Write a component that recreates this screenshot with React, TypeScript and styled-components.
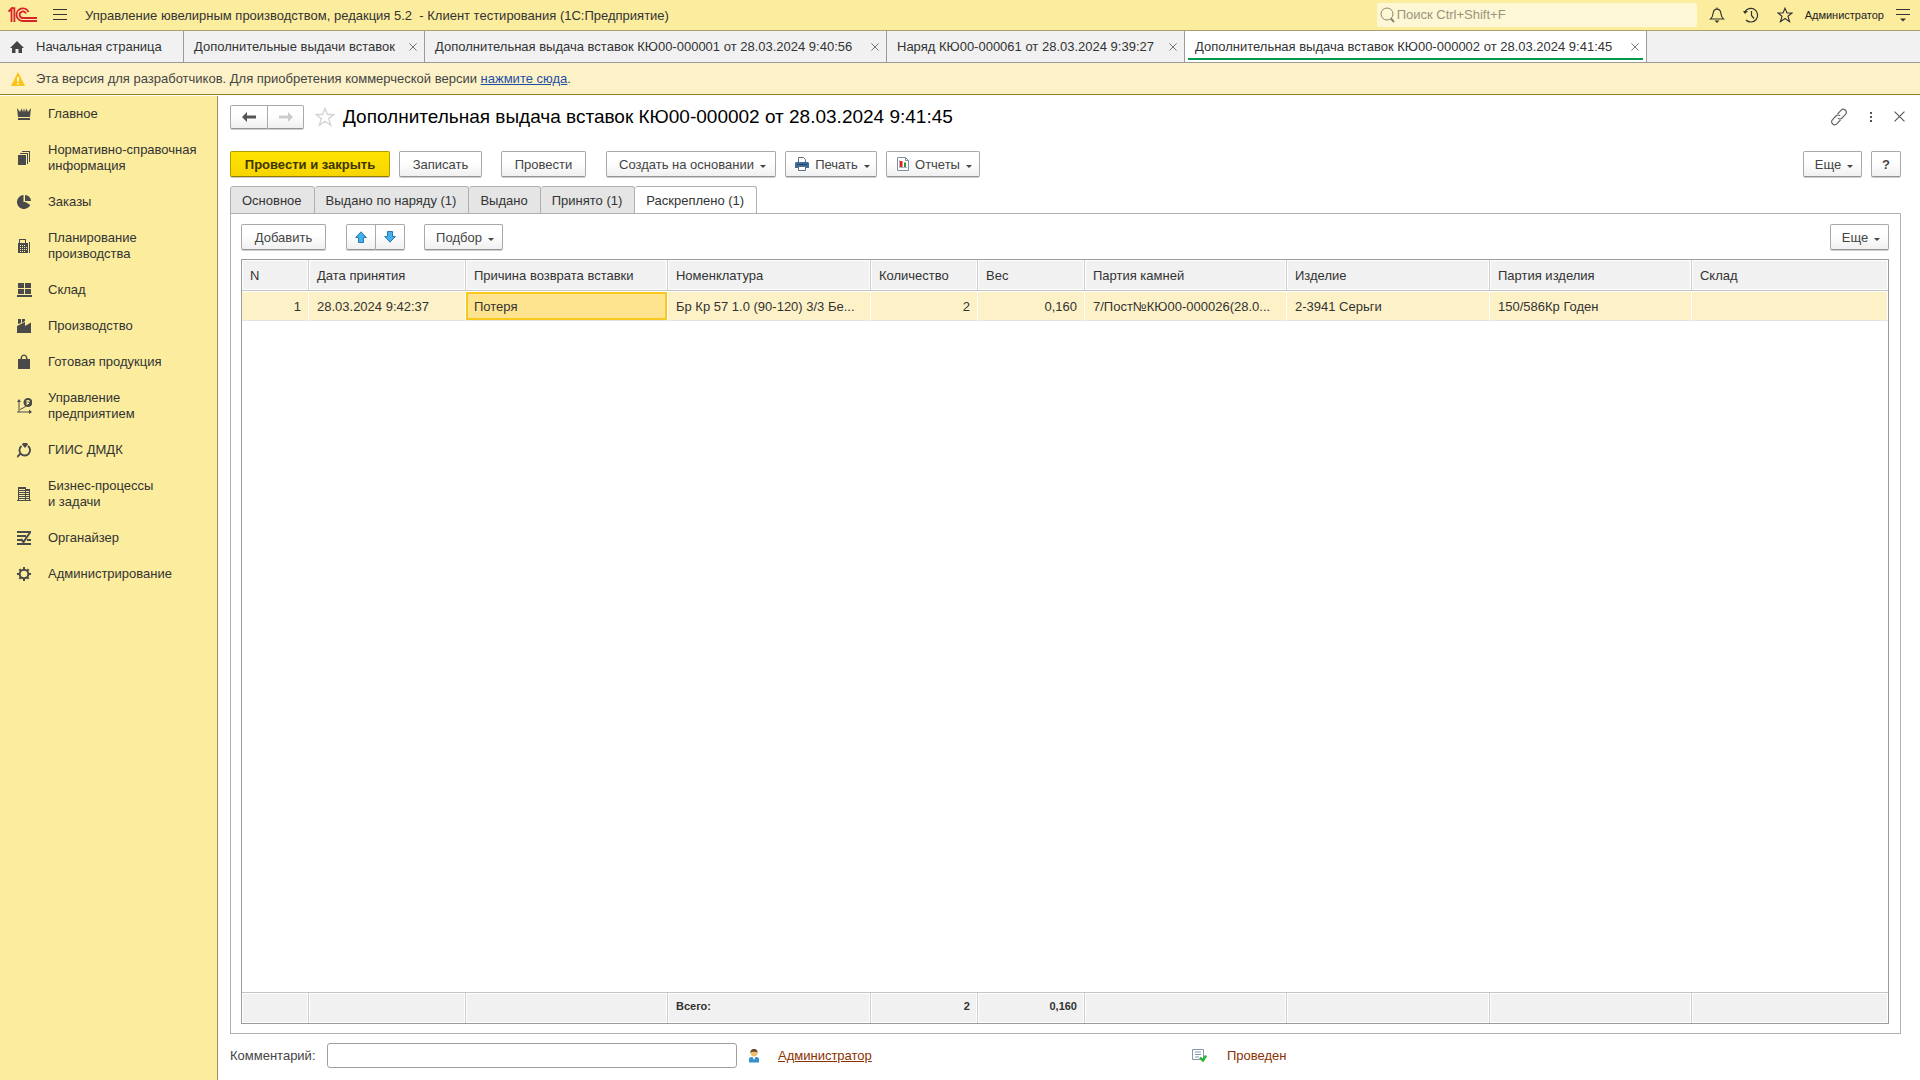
import React from "react";
import styled, { createGlobalStyle, css } from "styled-components";

const Global = createGlobalStyle`
  *, *::before, *::after { box-sizing: border-box; }
  body { margin: 0; background: #fff; }
  body, button, input { font-family: "Liberation Sans", Arial, sans-serif; font-size: 13px; color: #333; }
  button { cursor: pointer; }
  svg { display: block; flex: none; }
`;

const Page = styled.div`
  min-height: 100vh;
  display: flex;
  flex-direction: column;
`;

const TitleBar = styled.header`
  height: 31px;
  display: flex;
  align-items: center;
  background: #fbec9e;
  border-bottom: 1px solid #aba06b;
  padding: 0 10px 0 8px;
`;

const IconButton = styled.button`
  border: 0;
  background: none;
  padding: 0;
  display: grid;
  place-items: center;
  color: #333;
`;

const AppTitle = styled.div`
  margin-left: 18px;
  flex: 1;
  white-space: pre;
`;

const MenuToggle = styled(IconButton)`
  margin-left: 16px;
`;

const SearchBox = styled.label`
  width: 320px;
  height: 24px;
  margin-bottom: 1px;
  display: flex;
  align-items: center;
  gap: 2px;
  padding: 0 3px;
  background: #fef7d5;
  border-radius: 2px;
  color: #8c8768;
`;

const SearchInput = styled.input`
  border: 0;
  outline: 0;
  padding: 0;
  flex: 1;
  min-width: 0;
  background: none;
  &::placeholder { color: #99947a; opacity: 1; }
`;

const TopTools = styled.div`
  display: flex;
  align-items: center;
  gap: 18px;
  margin-left: 12px;
`;

const UserName = styled.a`
  font-size: 11px;
  color: #222;
  text-decoration: none;
  margin: 0 -6px;
`;

const TabStrip = styled.nav`
  height: 32px;
  display: flex;
  background: #f1f1f1;
  border-bottom: 1px solid #9b9b9b;
`;

const WindowTab = styled.div<{ $w: number; $active?: boolean }>`
  width: ${(p) => p.$w}px;
  display: flex;
  align-items: center;
  justify-content: space-between;
  padding: 0 7px 0 10px;
  border-right: 1px solid #9b9b9b;
  white-space: nowrap;
  ${(p) =>
    p.$active &&
    css`
      background: linear-gradient(#009b4d, #009b4d) 3px 27px / calc(100% - 6px) 2px no-repeat #fff;
    `}
`;

const TabLabel = styled.button`
  border: 0;
  background: none;
  padding: 0;
  display: flex;
  align-items: center;
  gap: 12px;
`;

const Notice = styled.div`
  height: 32px;
  display: flex;
  align-items: center;
  gap: 11px;
  padding: 0 11px;
  background: #fdf2c7;
  border-bottom: 1px solid #96801c;
  color: #444;
  a { color: #1d4fa5; }
`;

const Body = styled.div`
  flex: 1;
  display: flex;
  padding-top: 1px;
`;

const Sidebar = styled.nav`
  width: 218px;
  flex: none;
  background: #fbec9e;
  border-right: 1px solid #968e5f;
`;

const SideLink = styled.a`
  display: grid;
  grid-template-columns: 15px 1fr;
  align-items: center;
  gap: 16px;
  padding: 10px 4px 10px 17px;
  line-height: 16px;
  color: #333;
  text-decoration: none;
  white-space: pre-line;
  svg { color: #4a4a4a; }
`;

const Main = styled.main`
  flex: 1;
  min-width: 0;
  display: flex;
  flex-direction: column;
  padding: 8px 19px 12px 12px;
`;

const FormHeader = styled.div`
  display: flex;
  align-items: center;
  height: 25px;
  margin-bottom: 22px;
`;

const StarButton = styled(IconButton)`
  margin-left: 11px;
`;

const FormTitle = styled.h1`
  flex: 1;
  margin: 0 0 0 8px;
  font-size: 19px;
  line-height: 22px;
  font-weight: 400;
  color: #000;
`;

const FormTools = styled.div`
  display: flex;
  align-items: center;
  gap: 21px;
  margin-right: -4px;
`;

const Bar = styled.div`
  display: flex;
  align-items: center;
`;

const Button = styled.button<{ $w: number; $primary?: boolean; $before?: number }>`
  width: ${(p) => p.$w}px;
  height: 26px;
  margin-left: ${(p) => p.$before ?? 0}px;
  padding: 0;
  display: flex;
  align-items: center;
  justify-content: center;
  gap: 6px;
  white-space: nowrap;
  border: 1px solid #a9a9a9;
  border-bottom-color: #949494;
  border-radius: 2px;
  background: linear-gradient(#fff 40%, #f0f0f0);
  box-shadow: 0 1px 0 #cfcfcf;
  color: #444;
  ${(p) =>
    p.$primary &&
    css`
      font-weight: 700;
      color: #3d3500;
      border-color: #b59c00;
      border-bottom-color: #8f7b00;
      background: linear-gradient(#ffe300, #f7d500);
    `}
`;

const ButtonPair = styled.div<{ $before?: number }>`
  display: flex;
  margin-left: ${(p) => p.$before ?? 0}px;
  button { border-radius: 2px 0 0 2px; }
  button + button { border-left: 0; border-radius: 0 2px 2px 0; }
`;

const NavButton = styled(Button)`
  height: 24px;
`;

const Caret = styled.span`
  width: 0;
  border: 3px solid transparent;
  border-top-color: #444;
  border-bottom: 0;
  margin: 4px -3px 0 0;
`;

const Spacer = styled.div`
  flex: 1;
`;

const PageTabs = styled.div`
  display: flex;
  height: 28px;
  margin: 9px 0 -1px;
`;

const PageTab = styled.button<{ $active?: boolean }>`
  padding: 0 12px 0 11px;
  border: 1px solid #b0b0b0;
  border-radius: 3px 3px 0 0;
  background: #e5e5e5;
  & + & { border-left: 0; }
  ${(p) => p.$active && css`background: #fff; border-bottom-color: #fff;`}
`;

const Panel = styled.section`
  flex: 1;
  display: flex;
  flex-direction: column;
  padding: 10px 11px 9px 10px;
  border: 1px solid #b0b0b0;
`;

const TableFrame = styled.div`
  flex: 1;
  display: flex;
  flex-direction: column;
  margin-top: 9px;
  border: 1px solid #9b9b9b;
`;

const Grid = styled.table`
  width: 100%;
  flex: 1;
  height: 100%;
  table-layout: fixed;
  border-collapse: separate;
  border-spacing: 0;
  text-align: left;
  th, td { padding: 0 7px 0 8px; white-space: nowrap; overflow: hidden; }
`;

const HeadCell = styled.th`
  height: 31px;
  font-weight: 400;
  background: #f1f1f1;
  border-right: 1px solid #cdcdcd;
  border-bottom: 1px solid #c4c4c4;
  box-shadow: inset 0 0 0 1px #fff;
  &:last-child { border-right: 0; }
`;

const Cell = styled.td<{ $num?: boolean; $current?: boolean }>`
  height: 30px;
  background: #fdf2c7;
  border-top: 1px solid #fff;
  border-right: 1px solid #fff;
  border-bottom: 1px solid #e3e3e3;
  text-align: ${(p) => (p.$num ? "right" : "left")};
  ${(p) =>
    p.$current &&
    css`
      background: #ffe48f;
      box-shadow: inset 0 0 0 2px #f8c81e;
    `}
`;

const FootCell = styled.td<{ $num?: boolean }>`
  height: 31px;
  background: #f1f1f1;
  border-right: 1px solid #cdcdcd;
  border-top: 1px solid #c4c4c4;
  box-shadow: inset 0 0 0 1px #fff;
  font-size: 11px;
  font-weight: 700;
  text-align: ${(p) => (p.$num ? "right" : "left")};
  && { padding-bottom: 4px; }
  &:last-child { border-right: 0; }
`;

const Footer = styled.footer`
  display: flex;
  align-items: center;
  margin-top: 9px;
  a { color: #8b3100; }
`;

const CommentLabel = styled.label`
  width: 97px;
  color: #444;
`;

const CommentInput = styled.input`
  width: 410px;
  height: 25px;
  border: 1px solid #a0a0a0;
  border-radius: 3px;
  padding: 0 6px;
`;

const Author = styled.div`
  display: flex;
  align-items: center;
  gap: 19px;
  width: 443px;
  margin-left: 12px;
`;

const Status = styled.div`
  display: flex;
  align-items: center;
  gap: 20px;
  color: #8b3100;
`;

const Logo = () => (
  <svg width="29" height="16" viewBox="0 0 29 16" fill="none" stroke="#d8232a" strokeWidth="1.8">
    <path d="M0.5 4.5 L3.5 1.5 V15 M3 1.2 H6.4 V15" />
    <path d="M20.5 5 A6.3 6.3 0 1 0 15 14 H29" />
    <path d="M18 6.5 A3.3 3.3 0 1 0 15 11 H29" />
  </svg>
);

const Burger = () => (
  <svg width="14" height="12" viewBox="0 0 14 12" stroke="#333">
    <path d="M0 .5h14M0 5.5h14M0 10.5h14" />
  </svg>
);

const Magnifier = () => (
  <svg width="15" height="16" viewBox="0 0 15 16" fill="none" stroke="currentColor">
    <circle cx="7" cy="7" r="6" />
    <path d="M10.8 11.5 L14 15" strokeWidth="2" />
  </svg>
);

const Bell = () => (
  <svg width="16" height="16" viewBox="0 0 16 16" fill="none" stroke="currentColor" strokeWidth="1.2">
    <path d="M8 .5v1.5M1.5 12c2-1.8 2.3-3.5 2.6-5.5C4.4 3.6 5.8 2.2 8 2.2s3.600 1.400 3.900 4.300c.3 2 .6 3.700 2.600 5.500z" />
    <path d="M5.500 13.500h5L8 16z" fill="currentColor" stroke="none" />
  </svg>
);

const History = () => (
  <svg width="16" height="16" viewBox="0 0 16 16" fill="none" stroke="currentColor" strokeWidth="1.2">
    <path d="M1.8 5A6.800 6.800 0 1 1 3 13M8.500 4v4.500l2.500 3" />
    <path d="M0 4h5L2 7z" fill="currentColor" stroke="none" />
  </svg>
);

const Star = ({ size, color }: { size: number; color: string }) => (
  <svg width={size} height={size} viewBox="0 0 20 20" fill="none" stroke={color} strokeWidth="1.4">
    <path d="M10 1.5l2.5 6h6.3l-5.1 4.100 2 6.700L10 14.300l-5.700 4 2-6.700L1.200 7.500h6.300z" />
  </svg>
);

const MainMenu = () => (
  <svg width="14" height="14" viewBox="0 0 14 14" stroke="currentColor">
    <path d="M0 1.5h14M0 6.5h14" />
    <path d="M4 10.500h6L7 13.500z" fill="currentColor" stroke="none" />
  </svg>
);

const Home = () => (
  <svg width="14" height="14" viewBox="0 0 14 14" fill="#444">
    <path d="M7 1L14 8h-2v5H8.5V9h-3v4H2V8H0z" />
  </svg>
);

const Cross = ({ size }: { size: number }) => (
  <svg width={size} height={size} viewBox="0 0 10 10" fill="none" stroke="#555">
    <path d="M.5.5l9 9M9.500.5l-9 9" />
  </svg>
);

const Warning = () => (
  <svg width="14" height="14" viewBox="0 0 14 14">
    <path d="M7 0l7 14H0z" fill="#fcc419" />
    <path d="M7 5v4.5M7 11v1.5" stroke="#fff" strokeWidth="1.6" />
  </svg>
);

const Link = () => (
  <svg width="18" height="18" viewBox="0 0 18 18" fill="none" stroke="#666" strokeWidth="1.2">
    <path d="M7.500 6l3.500-3.700a3 3 0 0 1 4.500 4L12 10c-1 1-3 1.200-4 .2" />
    <path d="M10.500 12l-3.500 3.700a3 3 0 0 1-4.500-4L6 8c1-1 3-1.200 4-.2" />
  </svg>
);

const Dots = () => (
  <svg width="4" height="14" viewBox="0 0 4 14" fill="#555">
    <path d="M1 2h2v2H1zM1 6h2v2H1zM1 10h2v2H1z" />
  </svg>
);

const Arrow = ({ back }: { back?: boolean }) => (
  <svg width="14" height="10" viewBox="0 0 14 10" fill={back ? "#555" : "#ccc"}>
    <path d={back ? "M0 5l5-5v3.500h9v3H5V10z" : "M14 5L9 0v3.500H0v3h9V10z"} />
  </svg>
);

const Move = ({ up }: { up?: boolean }) => (
  <svg width="12" height="12" viewBox="0 0 12 12" fill="#41b0ec" stroke="#2c78ad">
    <path d={up ? "M6 .8l5.300 5.700H8.500v5h-5v-5H.7z" : "M6 11.200L.7 5.500h2.800v-5h5v5h2.800z"} />
  </svg>
);

const Printer = () => (
  <svg width="14" height="14" viewBox="0 0 14 14">
    <path d="M3.5 5V.5h5l2 2V5" fill="#fff" stroke="#5c6f82" />
    <path d="M1 5h12l1 1v5H0V6z" fill="#3f6c99" />
    <path d="M2 7.5h10" stroke="#20496f" />
    <path d="M3.5 9.500h7v4h-7z" fill="#fff" stroke="#5c6f82" />
  </svg>
);

const Report = () => (
  <svg width="12" height="14" viewBox="0 0 12 14">
    <path d="M.5.5h8l3 3v10H.5z" fill="#fff" stroke="#7f8fa0" />
    <path d="M8.500.5v3h3" fill="none" stroke="#7f8fa0" />
    <path d="M2.500 3v7.500h7.500" fill="none" stroke="#a9b5c0" />
    <path d="M3 4h2.500v6H3z" fill="#e3221c" />
    <path d="M7 5.500h2V10H7z" fill="#27993c" />
  </svg>
);

const Person = () => (
  <svg width="10" height="14" viewBox="0 0 10 14">
    <path d="M0 13.500V10q0-2 3-2h4q3 0 3 2v3.500z" fill="#3790cb" />
    <path d="M3.500 8h3L5 11z" fill="#fff" />
    <circle cx="5" cy="4.200" r="3.200" fill="#f0bc6c" />
    <path d="M1.500 4.500C1 1 3 0 5 0s4 1 3.500 4.500L7.500 2.800h-5z" fill="#5e4524" />
  </svg>
);

const Posted = () => (
  <svg width="15" height="13" viewBox="0 0 15 13">
    <path d="M.5.5h11v10H.5z" fill="#fff" stroke="#8496ac" />
    <path d="M3 3h6M3 5.500h6M3 8h4" stroke="#8496ac" />
    <path d="M8 8.500l3 3L14 6.500" fill="none" stroke="#25b52e" strokeWidth="2.400" />
  </svg>
);

const Glyph = ({ children }: { children: React.ReactNode }) => (
  <svg width="15" height="16" viewBox="0 0 15 16" fill="currentColor">
    {children}
  </svg>
);

const sections: { name: string; icon: React.ReactNode }[] = [
  { name: "Главное", icon: <path d="M0 2l3 4L4.500 2.500 6 6l1-4 1 4 1.500-3.500L11 6l3-4-1 9H1zM1 12h12v2H1z" /> },
  {
    name: "Нормативно-справочная\nинформация",
    icon: <path d="M1 5h8v10H1zM3 3h8v11h-1V4H3zM5 1h8v11h-1V2H5z" />,
  },
  { name: "Заказы", icon: <path d="M6.500 1v7h2l4.800 3A7 7 0 1 1 6.500 1zM8 1a6 6 0 0 1 6 6H8z" /> },
  {
    name: "Планирование\nпроизводства",
    icon: (
      <path
        fillRule="evenodd"
        d="M1 5h1V1h7v4h2v10H1zM3 2v3h5V2zM3 7v1h1V7zm2 0v1h1V7zm2 0v1h1V7zM3 9v1h1V9zm2 0v1h1V9zm2 0v1h1V9zm2 0v1h1V9zM3 11v1h1v-1zm2 0v1h1v-1zm2 0v1h1v-1zm2 0v1h1v-1zM3 13v1h1v-1zm2 0v1h1v-1zm2 0v1h1v-1zM12 4h1v11h-1z"
      />
    ),
  },
  { name: "Склад", icon: <path d="M1 1h6v5H1zM8 1h6v5H8zM1 7h6v5H1zM8 7h6v5H8zM0 13h15v2H0z" /> },
  { name: "Производство", icon: <path d="M1 1h3v4L1 6zM5 1h3v2L5 5zM0 8l8-4v4l6-3.500V15H0z" /> },
  {
    name: "Готовая продукция",
    icon: <path fillRule="evenodd" d="M1 5h2.500C3.500 2 5 .5 7 .5S10.500 2 10.500 5H13v10H1zM5 5h4c0-2-.7-3.200-2-3.200S5 3 5 5z" />,
  },
  {
    name: "Управление\nпредприятием",
    icon: (
      <>
        <path d="M2 1l2 3H2.500v9.500H12V11.500l3 2.500-3 2v-1.500H0v-1h1.500V4H0z" />
        <path d="M3 11.500l4-2 2-1.500" fill="none" stroke="currentColor" />
        <path fillRule="evenodd" d="M11 0a4.500 4.500 0 1 1 0 9 4.500 4.500 0 0 1 0-9zM9.500 2v5h1V6H12V5h-1.500V4.500H12l1-1L12 2zm1 1h1v.8h-1z" />
      </>
    ),
  },
  {
    name: "ГИИС ДМДК",
    icon: (
      <>
        <path d="M4.500 4A5.300 5.300 0 1 0 11 4M4 11L0 15" fill="none" stroke="currentColor" strokeWidth="1.900" />
        <path d="M5 2.500L6 1h4l1 1.500L8 6z" />
      </>
    ),
  },
  {
    name: "Бизнес-процессы\nи задачи",
    icon: (
      <path
        fillRule="evenodd"
        d="M1 1h8v2h4v11h1v1H0v-1h1zM2 3v1h6V3zm0 2v1h6V5zm0 2v1h6V7zm0 2v1h6V9zm0 2v1h6v-1zm0 2v1h6v-1zM9 5v1h3V5zm0 2v1h3V7zm0 2v1h3V9zm0 2v1h3v-1zm0 2v1h3v-1z"
      />
    ),
  },
  {
    name: "Органайзер",
    icon: (
      <>
        <path d="M0 1h14v2H0zM0 5h9v2H0zM0 9h4v2H0zM10 9h4v2h-4zM0 13h14v2H0z" />
        <path d="M4 9l2.500 3L13 2.500" fill="none" stroke="currentColor" strokeWidth="2" />
      </>
    ),
  },
  {
    name: "Администрирование",
    icon: (
      <g fill="none" stroke="currentColor" strokeWidth="2">
        <circle cx="7" cy="8" r="4.300" />
        <path d="M7 1v3M7 12v3M0 8h3M11 8h3M2.300 3.300l2 2M9.700 10.700l2 2M2.300 12.700l2-2M9.700 5.300l2-2" />
      </g>
    ),
  },
];

const windows = [
  { name: "Дополнительные выдачи вставок", width: 241 },
  { name: "Дополнительная выдача вставок КЮ00-000001 от 28.03.2024 9:40:56", width: 462 },
  { name: "Наряд КЮ00-000061 от 28.03.2024 9:39:27", width: 298 },
  { name: "Дополнительная выдача вставок КЮ00-000002 от 28.03.2024 9:41:45", width: 462 },
];

const pageTabs = ["Основное", "Выдано по наряду (1)", "Выдано", "Принято (1)", "Раскреплено (1)"];

const columns: { title: string; share: number; value: string; total?: string; num?: boolean; current?: boolean }[] = [
  { title: "N", share: 67, value: "1", num: true },
  { title: "Дата принятия", share: 157, value: "28.03.2024 9:42:37" },
  { title: "Причина возврата вставки", share: 202, value: "Потеря", current: true },
  { title: "Номенклатура", share: 203, value: "Бр Кр 57 1.0 (90-120) 3/3 Бе...", total: "Всего:" },
  { title: "Количество", share: 107, value: "2", total: "2", num: true },
  { title: "Вес", share: 107, value: "0,160", total: "0,160", num: true },
  { title: "Партия камней", share: 202, value: "7/Пост№КЮ00-000026(28.0..." },
  { title: "Изделие", share: 203, value: "2-3941 Серьги" },
  { title: "Партия изделия", share: 202, value: "150/586Кр Годен" },
  { title: "Склад", share: 196, value: "" },
];
const shareSum = columns.reduce((sum, c) => sum + c.share, 0);

export default function App() {
  return (
    <Page>
      <Global />
      <TitleBar>
        <Logo />
        <MenuToggle aria-label="Меню">
          <Burger />
        </MenuToggle>
        <AppTitle>{"Управление ювелирным производством, редакция 5.2  - Клиент тестирования (1С:Предприятие)"}</AppTitle>
        <SearchBox>
          <Magnifier />
          <SearchInput type="text" aria-label="Поиск" placeholder="Поиск Ctrl+Shift+F" />
        </SearchBox>
        <TopTools>
          <IconButton aria-label="Оповещения"><Bell /></IconButton>
          <IconButton aria-label="История"><History /></IconButton>
          <IconButton aria-label="Избранное"><Star size={16} color="#333" /></IconButton>
          <UserName href="#">Администратор</UserName>
          <IconButton aria-label="Сервис"><MainMenu /></IconButton>
        </TopTools>
      </TitleBar>

      <TabStrip>
        <WindowTab $w={184}>
          <TabLabel><Home />Начальная страница</TabLabel>
        </WindowTab>
        {windows.map((w, i) => (
          <WindowTab key={w.name} $w={w.width} $active={i === windows.length - 1}>
            <TabLabel>{w.name}</TabLabel>
            <IconButton aria-label="Закрыть"><Cross size={8} /></IconButton>
          </WindowTab>
        ))}
      </TabStrip>

      <Notice>
        <Warning />
        <span>
          Эта версия для разработчиков. Для приобретения коммерческой версии <a href="#">нажмите сюда</a>.
        </span>
      </Notice>

      <Body>
        <Sidebar>
          {sections.map((s) => (
            <SideLink key={s.name} href="#">
              <Glyph>{s.icon}</Glyph>
              <span>{s.name}</span>
            </SideLink>
          ))}
        </Sidebar>

        <Main>
          <FormHeader>
            <ButtonPair>
              <NavButton $w={38} aria-label="Назад"><Arrow back /></NavButton>
              <NavButton $w={36} aria-label="Вперед"><Arrow /></NavButton>
            </ButtonPair>
            <StarButton aria-label="В избранное"><Star size={20} color="#d5d5d5" /></StarButton>
            <FormTitle>Дополнительная выдача вставок КЮ00-000002 от 28.03.2024 9:41:45</FormTitle>
            <FormTools>
              <IconButton aria-label="Ссылка"><Link /></IconButton>
              <IconButton aria-label="Еще"><Dots /></IconButton>
              <IconButton aria-label="Закрыть"><Cross size={11} /></IconButton>
            </FormTools>
          </FormHeader>

          <Bar>
            <Button $w={160} $primary>Провести и закрыть</Button>
            <Button $w={83} $before={9}>Записать</Button>
            <Button $w={85} $before={19}>Провести</Button>
            <Button $w={170} $before={20}>Создать на основании<Caret /></Button>
            <Button $w={92} $before={9}><Printer />Печать<Caret /></Button>
            <Button $w={94} $before={9}><Report />Отчеты<Caret /></Button>
            <Spacer />
            <Button $w={59}>Еще<Caret /></Button>
            <Button $w={30} $before={9}><b>?</b></Button>
          </Bar>

          <PageTabs role="tablist">
            {pageTabs.map((name, i) => (
              <PageTab key={name} role="tab" aria-selected={i === 4} $active={i === 4}>{name}</PageTab>
            ))}
          </PageTabs>

          <Panel>
            <Bar>
              <Button $w={85}>Добавить</Button>
              <ButtonPair $before={20}>
                <Button $w={30} aria-label="Вверх"><Move up /></Button>
                <Button $w={29} aria-label="Вниз"><Move /></Button>
              </ButtonPair>
              <Button $w={79} $before={19}>Подбор<Caret /></Button>
              <Spacer />
              <Button $w={59}>Еще<Caret /></Button>
            </Bar>

            <TableFrame>
              <Grid>
                <colgroup>
                  {columns.map((c) => (
                    <col key={c.title} style={{ width: `${(c.share / shareSum) * 100}%` }} />
                  ))}
                </colgroup>
                <thead>
                  <tr>{columns.map((c) => <HeadCell key={c.title}>{c.title}</HeadCell>)}</tr>
                </thead>
                <tbody>
                  <tr>
                    {columns.map((c) => (
                      <Cell key={c.title} $num={c.num} $current={c.current}>{c.value}</Cell>
                    ))}
                  </tr>
                  <tr><td colSpan={columns.length} /></tr>
                </tbody>
                <tfoot>
                  <tr>{columns.map((c) => <FootCell key={c.title} $num={c.num}>{c.total}</FootCell>)}</tr>
                </tfoot>
              </Grid>
            </TableFrame>
          </Panel>

          <Footer>
            <CommentLabel htmlFor="comment">Комментарий:</CommentLabel>
            <CommentInput id="comment" type="text" />
            <Author>
              <Person />
              <a href="#">Администратор</a>
            </Author>
            <Status>
              <Posted />
              Проведен
            </Status>
          </Footer>
        </Main>
      </Body>
    </Page>
  );
}
